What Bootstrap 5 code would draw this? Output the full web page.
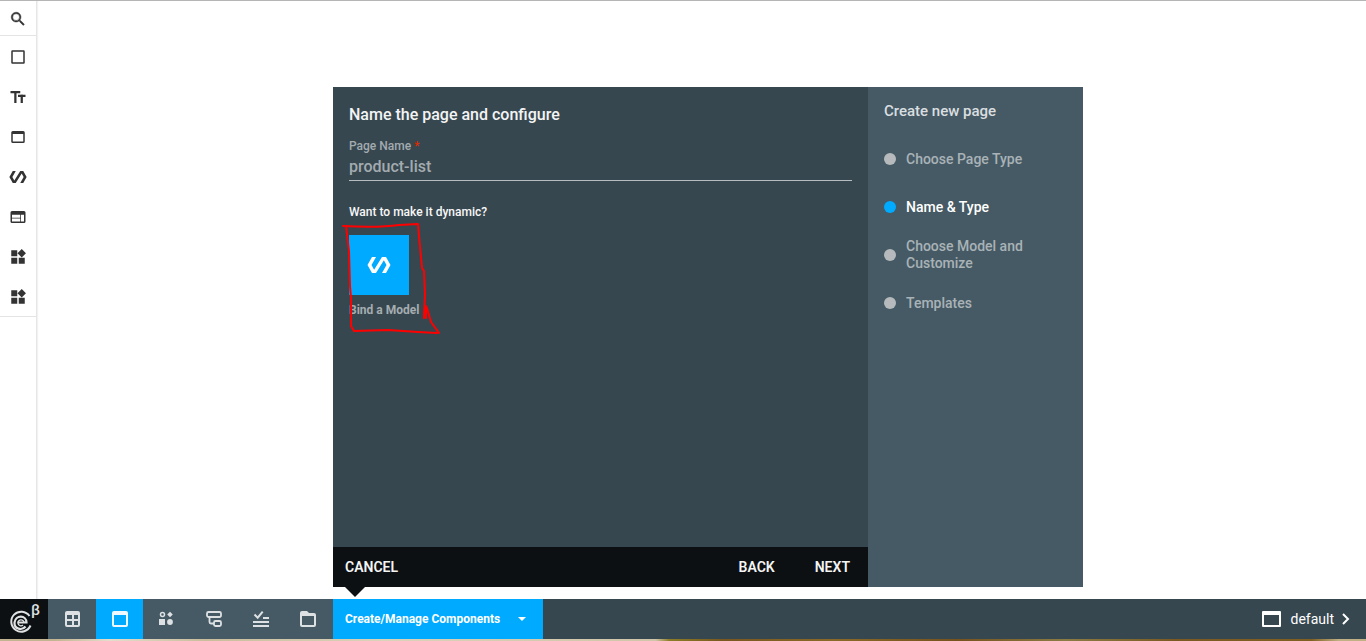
<!DOCTYPE html>
<html lang="en">
<head>
<meta charset="utf-8">
<meta name="viewport" content="width=device-width, initial-scale=1">
<title>Page builder</title>
<link href="https://cdn.jsdelivr.net/npm/bootstrap@5.3.0/dist/css/bootstrap.min.css" rel="stylesheet">
<style>
  :root { --ink: #37474f; --slate: #455a64; --azure: #00aaff; --coal: #0c1013; --mist: #b6babc; }
  body { font-family: Roboto, "Liberation Sans", sans-serif; font-size: 14px; background: #fff; border-top: 1px solid #b5b5b5; }
  button { border: 0; background: none; padding: 0; color: inherit; }
  svg { display: block; fill: currentColor; }
  .med { font-weight: 500; }

  .toolrail { width: 37px; color: #333; border-right: 1px solid #e6e6e6; box-shadow: 1px 0 1px #f2f2f2; }
  .toolrail button { height: 40px; }
  .toolrail .find { height: 35px; padding-top: 1px; border-bottom: 1px solid #e4e4e4; }
  .tools { height: 281px; border-bottom: 1px solid #e4e4e4; }

  .dock { height: 40px; background: var(--ink); color: #fff; }
  .dock-icons { background: var(--slate); color: #dde1e3; padding-right: 2px; }
  .dock-icons button { width: 47px; }
  .dock-icons .brand { width: 48px; background: var(--coal); }
  .dock-icons .grid-btn { width: 48px; }
  .dock-icons .on { background: var(--azure); color: #eef8ff; }
  .manage { width: 210px; height: 40px; background: var(--azure); font-size: 12px; padding: 0 16px 0 12px; }
  .stage-strip { height: 2px; background: linear-gradient(90deg, #c3b491 0 4%, #e4ddcb 8%, #c9bd9c 15%, #dbd2ba 28%, #d0c5a8 48%, #8c7d26 49%, #79571f 53%, #8a6a28 61%, #76521d 70%, #8b7b45 78%, #7b5a22 86%, #806021 96%, #c0b083 98%); }

  .wizard { position: absolute; left: 0; bottom: 52px; width: 750px; height: 500px; background: var(--ink); }
  .wizard::after { content: ""; position: absolute; left: 12px; top: 100%; border: 10px solid transparent; border-top-color: var(--coal); border-bottom: 0; }
  .wizard h2 { font-size: 16px; line-height: 24px; font-weight: 500; color: #f3f4f5; }
  .wizard .form-title { margin-bottom: 11px; }
  .wizard label { font-size: 12px; line-height: 16px; color: #a3abb0; }
  .wizard label span { color: #dd2c00; }
  .wizard input { border: 0; border-bottom: 1px solid #b6bcc0; background: none; color: #a3abb0; font-size: 16px; line-height: 24px; height: 27px; padding: 0 0 2px; outline: 0; font-weight: 500; }
  .wizard h3 { font-size: 12px; line-height: 16px; font-weight: 500; margin: 23px 0 15px; color: #f7f8f8; }
  .model { color: #a5adb1; font-size: 12px; line-height: 16px; }
  .model-icon { width: 60px; height: 60px; background: var(--azure); color: #fff; margin-bottom: 7px; }
  .scribble { position: absolute; left: -8px; top: -15px; fill: none; pointer-events: none; }
  .actions { height: 40px; background: var(--coal); color: #f4f5f5; padding: 0 18px 0 12px; }
  .actions button { font-weight: 600; }
  .steps { width: 215px; background: var(--slate); padding: 12px 16px; }
  .steps h2 { font-size: 15px; color: #dadee0; margin-bottom: 12px; }
  .steps li { height: 48px; line-height: 17px; color: #a9b2b7; }
  .steps li::before { content: ""; flex: none; width: 12px; height: 12px; border-radius: 50%; background: var(--mist); margin-right: 10px; }
  .steps li.now { color: #fff; }
  .steps li.now::before { background: var(--azure); }
</style>
</head>
<body class="d-flex flex-column vh-100 overflow-hidden">
<svg class="d-none">
  <symbol id="window" viewBox="0 0 24 24"><path d="M19 4H5a2 2 0 0 0-2 2v12a2 2 0 0 0 2 2h14a2 2 0 0 0 2-2V6a2 2 0 0 0-2-2zm0 14H5V8h14z"/></symbol>
  <symbol id="bind" viewBox="0 0 24 24"><path d="M19 4h-4L7.110 16.630 4.500 12 9 4H5L.5 12 5 20h4l7.890-12.630L19.500 12 15 20h4l4.500-8z"/></symbol>
  <symbol id="widgets" viewBox="0 0 24 24"><path d="M13 13v8h8v-8zM3 21h8v-8H3zM3 3v8h8V3zM17 1.200L11.300 7 17 12.500 22.600 7z"/></symbol>
</svg>

<main class="flex-grow-1 d-flex">
  <nav class="toolrail d-flex flex-column" aria-label="Elements">
    <button class="find d-flex align-items-center justify-content-center" aria-label="Search"><svg width="18" height="18" viewBox="0 0 24 24"><path stroke="currentColor" stroke-width=".6" d="M15.500 14h-.8l-.3-.3A6.500 6.500 0 1 0 13.700 14.400l.3.300v.8l5 5 1.500-1.500zm-6 0a4.500 4.500 0 1 1 0-9 4.500 4.500 0 0 1 0 9z"/></svg></button>
    <div class="tools d-flex flex-column pt-1">
      <button class="flex-shrink-0 d-flex justify-content-center pt-2" aria-label="Container"><svg width="18" height="18" viewBox="0 0 24 24"><path d="M4.500 3h15A1.500 1.500 0 0 1 21 4.500v15a1.500 1.500 0 0 1-1.500 1.500h-15A1.500 1.500 0 0 1 3 19.500v-15A1.500 1.500 0 0 1 4.500 3zM5 5v14h14V5z"/></svg></button>
      <button class="flex-shrink-0 d-flex justify-content-center pt-2" aria-label="Text"><svg width="18" height="18" viewBox="0 0 24 24"><rect x="2" y="4" width="13" height="3"/><rect x="7" y="4" width="3" height="16"/><rect x="12" y="9" width="10" height="3"/><rect x="15.500" y="9" width="3" height="11"/></svg></button>
      <button class="flex-shrink-0 d-flex justify-content-center pt-2" aria-label="Section"><svg width="18" height="18"><use href="#window"/></svg></button>
      <button class="flex-shrink-0 d-flex justify-content-center pt-2" aria-label="Bindings"><svg width="18" height="18"><use href="#bind"/></svg></button>
      <button class="flex-shrink-0 d-flex justify-content-center pt-2" aria-label="Layout"><svg width="18" height="18" viewBox="0 0 24 24"><path d="M20 4H4a2 2 0 0 0-2 2v12a2 2 0 0 0 2 2h16a2 2 0 0 0 2-2V6a2 2 0 0 0-2-2zm-5 14H4v-4h11zm0-5H4V9h11zm5 5h-4V9h4z"/></svg></button>
      <button class="flex-shrink-0 d-flex justify-content-center pt-2" aria-label="Widgets"><svg width="18" height="18"><use href="#widgets"/></svg></button>
      <button class="flex-shrink-0 d-flex justify-content-center pt-2" aria-label="Components"><svg width="18" height="18"><use href="#widgets"/></svg></button>
    </div>
  </nav>
</main>

<footer class="dock d-flex">
  <div class="dock-icons d-flex">
    <button class="brand d-flex align-items-center justify-content-center" aria-label="Home"><svg width="48" height="40" viewBox="0 0 48 40"><g fill="none" stroke="#dfe1e2" stroke-width="2"><path d="M29.500 17A10 10 0 1 0 30.500 26.500"/><path d="M17.500 23.500h9c0-7.500-11-8-12 0-.5 6.500 7.500 8.500 11 4" stroke-width="2.200"/><path d="M24 23.500c-1-4-6-3-6 .5 0 3 3.500 3.500 5 2" stroke-width="1.300"/></g><text x="31" y="16" font-size="15" font-weight="500" font-family="Roboto" fill="#dfe1e2">β</text></svg></button>
    <button class="grid-btn d-flex align-items-center justify-content-center" aria-label="Dashboard"><svg width="18" height="18" viewBox="0 0 18 18"><path fill-rule="evenodd" d="M4 1h11a2 2 0 0 1 2 2v12a2 2 0 0 1-2 2H4a2 2 0 0 1-2-2V3a2 2 0 0 1 2-2zM4 5v4h5V5zM11 5v4h4V5zM4 11v4h5v-4zM11 11v4h4v-4z"/></svg></button>
    <button class="on d-flex align-items-center justify-content-center" aria-label="Pages"><svg width="18" height="18" viewBox="0 0 18 18"><path fill-rule="evenodd" d="M3 1h12a2 2 0 0 1 2 2v12a2 2 0 0 1-2 2H3a2 2 0 0 1-2-2V3a2 2 0 0 1 2-2zM3 5v10h12V5z"/></svg></button>
    <button class="d-flex align-items-center justify-content-center" aria-label="Shapes"><svg width="18" height="18" viewBox="0 0 18 18"><circle cx="4.500" cy="4.500" r="2" fill="none" stroke="currentColor" stroke-width="1.500"/><path d="M12 1.700L14.800 4.500l-2.800 2.800L9.200 4.500zM1 9h6v6H1z"/><circle cx="12" cy="12" r="2.900"/></svg></button>
    <button class="d-flex align-items-center justify-content-center" aria-label="Flow"><svg width="18" height="18" viewBox="0 0 18 18"><g fill="none" stroke="currentColor" stroke-width="1.800"><rect x="2" y="2" width="14" height="5" rx="1.500"/><path d="M4.500 7v5q0 1.500 1.500 1.500h3"/><rect x="9" y="11" width="7" height="5" rx="1.500"/></g></svg></button>
    <button class="d-flex align-items-center justify-content-center" aria-label="Tasks"><svg width="18" height="18" viewBox="0 0 18 18"><path d="M1 11h16v2H1zM1 15h16v2H1zM11 7h6v2h-6z"/><path d="M2.500 4.500l3.200 3.200 5-6" fill="none" stroke="currentColor" stroke-width="2"/></svg></button>
    <button class="d-flex align-items-center justify-content-center" aria-label="Files"><svg width="18" height="18" viewBox="0 0 18 18"><path fill-rule="evenodd" d="M3 1h5l2 2h5a2 2 0 0 1 2 2v10a2 2 0 0 1-2 2H3a2 2 0 0 1-2-2V3a2 2 0 0 1 2-2zM3 6v9h12V6z"/></svg></button>
  </div>

  <div class="position-relative">
    <button class="manage d-flex align-items-center justify-content-between fw-bold">Create/Manage Components<svg width="10" height="5" viewBox="0 0 10 5"><path d="M1 0h8L5 4z"/></svg></button>

    <section class="wizard d-flex" aria-label="Create new page">
      <form class="flex-grow-1 d-flex flex-column" onsubmit="return false">
        <div class="flex-grow-1 px-3 pt-3">
          <h2 class="form-title">Name the page and configure</h2>
          <div class="d-flex flex-column">
            <label class="med" for="pageName">Page Name <span>*</span></label>
            <input id="pageName" type="text" value="product-list" autocomplete="off">
          </div>
          <h3>Want to make it dynamic?</h3>
          <div class="position-relative">
            <button type="button" class="model fw-bold text-start text-nowrap">
              <span class="model-icon d-flex align-items-center justify-content-center"><svg width="24" height="24"><use href="#bind"/></svg></span>
              Bind a Model
            </button>
            <svg class="scribble" width="110" height="120" viewBox="341 220 110 120"><g stroke="#f00" stroke-width="2" stroke-linecap="round" stroke-linejoin="round"><path d="M343 226q35 2 56-1l19-1 1 12 3 32 2 3 1 23-1 24M346 226l3 25 1 35 1 12v28l3 5 34-1 30 2 19 1M424 313q2-8 3-5l4 14 8 11"/><path d="M426 306v12" /></g></svg>
          </div>
        </div>
        <div class="actions d-flex align-items-center">
          <button type="button" class="me-auto">CANCEL</button>
          <button type="button" class="me-4">BACK</button>
          <button type="button" class="ms-3">NEXT</button>
        </div>
      </form>
      <aside class="steps">
        <h2>Create new page</h2>
        <ol class="list-unstyled mb-0 med">
          <li class="d-flex align-items-center">Choose Page Type</li>
          <li class="d-flex align-items-center now">Name &amp; Type</li>
          <li class="d-flex align-items-center">Choose Model and Customize</li>
          <li class="d-flex align-items-center">Templates</li>
        </ol>
      </aside>
    </section>
  </div>

  <button class="d-flex align-items-center ms-auto me-3"><svg class="me-2" width="20" height="18" viewBox="0 0 20 18"><path fill-rule="evenodd" d="M1 1h17a1 1 0 0 1 1 1v14a1 1 0 0 1-1 1H1a1 1 0 0 1-1-1V2a1 1 0 0 1 1-1zM2 5v10h15V5z"/></svg>default<svg class="ms-2" width="8" height="12" viewBox="0 0 8 12"><path d="M1 1l5 5-5 5" fill="none" stroke="#fff" stroke-width="2"/></svg></button>
</footer>
<div class="stage-strip"></div>
<script src="https://cdn.jsdelivr.net/npm/bootstrap@5.3.0/dist/js/bootstrap.bundle.min.js"></script>
</body>
</html>
